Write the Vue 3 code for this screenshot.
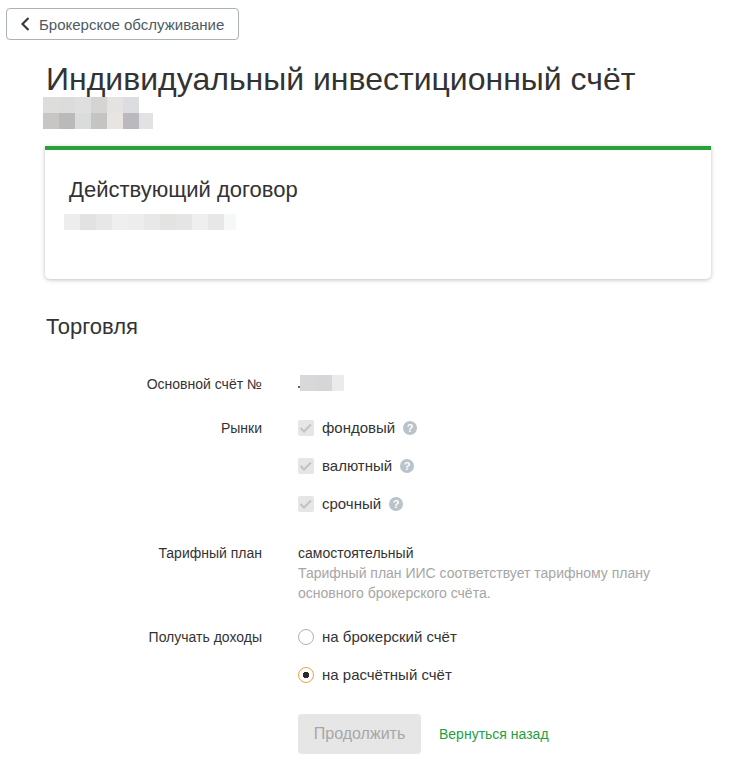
<template>
  <div class="page">
    <a class="back-btn">
      <svg class="back-icon" width="10" height="14" viewBox="0 0 10 14">
        <path d="M8.500 1 2.500 7 8.500 13" fill="none" stroke="#3c3c3c" stroke-width="2.200" />
      </svg>
      Брокерское обслуживание
    </a>

    <div class="content">
      <h1>Индивидуальный инвестиционный счёт</h1>
      <div class="blur-title">
        <div v-for="(row, i) in titleBlur" :key="i" class="blur-row">
          <span v-for="(c, j) in row" :key="j" class="cell" :style="{ background: c }"></span>
        </div>
      </div>

      <div class="card">
        <h3>Действующий договор</h3>
        <div class="blur-row contract-blur">
          <span v-for="(c, j) in contractBlur" :key="j" class="cell" :style="{ background: c }"></span>
        </div>
      </div>

      <h2>Торговля</h2>

      <div class="form">
        <div class="row account-row">
          <div class="label">Основной счёт №</div>
          <div class="value">
            <div class="blur-row account-blur">
              <span class="speck"></span>
              <span v-for="(c, j) in accountBlur" :key="j" class="cell" :style="{ background: c }"></span>
            </div>
          </div>
        </div>

        <div class="row markets-row">
          <div class="label">Рынки</div>
          <div class="value options">
            <label v-for="m in markets" :key="m" class="option">
              <span class="checkbox">
                <svg width="16" height="16" viewBox="0 0 16 16">
                  <path d="M2.500 8 6 11.500 13 4.500" fill="none" stroke="#c2c2c2" stroke-width="2" />
                </svg>
              </span>
              {{ m }}
              <span class="hint">?</span>
            </label>
          </div>
        </div>

        <div class="row plan-row">
          <div class="label">Тарифный план</div>
          <div class="value">
            <div>самостоятельный</div>
            <div class="note">Тарифный план ИИС соответствует тарифному плану<br>основного брокерского счёта.</div>
          </div>
        </div>

        <div class="row income-row">
          <div class="label">Получать доходы</div>
          <div class="value options income">
            <label class="option">
              <span class="radio"></span>
              на брокерский счёт
            </label>
            <label class="option">
              <span class="radio checked"></span>
              на расчётный счёт
            </label>
          </div>
        </div>

        <div class="row actions">
          <div class="label"></div>
          <div class="value action-line">
            <button class="submit" disabled>Продолжить</button>
            <a class="link">Вернуться назад</a>
          </div>
        </div>
      </div>
    </div>
  </div>
</template>

<script setup>
const titleBlur = [
  ['#dddddc', '#dcdcdc', '#dedfdf', '#d5d4d3', '#e5e3e2', '#dcdde1'],
  ['#c7c6c5', '#b9bab9', '#dadbdb', '#c5c4c2', '#e7e4e1', '#b9b9be', '#e2e2e5']
]
const contractBlur = ['#ededed', '#e2e2e2', '#e7e7e7', '#efefef', '#ededed', '#e8e8e8', '#e3e3e2', '#e5e5e5', '#efefef', '#e7e7e7', '#f6f7f7']
const accountBlur = ['#d8d8da', '#d6d6d8', '#ebebed']
const markets = ['фондовый', 'валютный', 'срочный']
</script>

<style>
body {
  background: #fff;
}
</style>

<style scoped>
.page {
  height: 770px;
  overflow: hidden;
  padding: 8px 0 0 6px;
  box-sizing: border-box;
  font-family: "Liberation Sans", Arial, sans-serif;
  font-size: 14px;
  color: #333;
}

.back-btn {
  display: flex;
  align-items: center;
  width: 233px;
  height: 32px;
  box-sizing: border-box;
  padding-left: 13px;
  border: 1px solid #a9b2b9;
  border-radius: 4px;
  color: #4d5a64;
  font-size: 15px;
}

.back-icon {
  margin-right: 9px;
}

.content {
  width: 666px;
  margin-left: 39px;
}

h1 {
  margin: 19px 0 0 1px;
  font-size: 32px;
  line-height: 40px;
  font-weight: 400;
  color: #333;
}

.blur-title {
  margin: -2px 0 0 -2px;
}

.blur-row {
  display: flex;
  height: 16px;
}

.cell {
  display: block;
  width: 16px;
  height: 16px;
  flex: none;
}

.blur-title .blur-row:last-child .cell:last-child {
  width: 14px;
}

.card {
  height: 133px;
  box-sizing: border-box;
  margin-top: 17px;
  padding: 28px 24px 0;
  background: #fff;
  border-top: 4px solid #28a03c;
  border-radius: 0 0 5px 5px;
  box-shadow: 0 1px 4px rgba(0, 0, 0, 0.25);
}

h3 {
  margin: 0;
  font-size: 22px;
  line-height: 24px;
  font-weight: 400;
}

.contract-blur {
  margin: 12px 0 0 -5px;
}

.contract-blur .cell:last-child {
  width: 12px;
}

h2 {
  margin: 36px 0 0 1px;
  font-size: 22px;
  line-height: 24px;
  font-weight: 400;
}

.form {
  margin-top: 35px;
}

.row {
  display: flex;
}

.label {
  width: 217px;
  flex: none;
  text-align: right;
  line-height: 20px;
}

.value {
  margin-left: 36px;
  line-height: 20px;
}

.account-blur {
  margin-top: 1px;
  align-items: flex-start;
}

.account-blur .cell:last-child {
  width: 12px;
}

.speck {
  width: 2px;
  height: 2px;
  margin-top: 11px;
  background: #666;
}

.markets-row {
  margin-top: 24px;
}

.options {
  display: flex;
  flex-direction: column;
  gap: 18px;
}

.option {
  display: flex;
  align-items: center;
  height: 20px;
  font-size: 15px;
}

.checkbox {
  display: flex;
  width: 16px;
  height: 16px;
  margin-right: 8px;
  background: #e6e6e6;
  border-radius: 2px;
}

.hint {
  width: 14px;
  height: 14px;
  margin-left: 8px;
  border-radius: 50%;
  background: #b9c3c9;
  color: #fff;
  font-size: 11px;
  font-weight: 700;
  line-height: 14px;
  text-align: center;
}

.plan-row {
  margin-top: 29px;
}

.note {
  color: #a6a6a6;
}

.income-row {
  margin-top: 24px;
}

.radio {
  width: 16px;
  height: 16px;
  margin-right: 8px;
  box-sizing: border-box;
  border: 1.500px solid #a9b2b9;
  border-radius: 50%;
}

.radio.checked {
  border-color: #f5a03c;
  background: radial-gradient(circle, #2b2b2b 3px, #fff 3.500px);
}

.actions {
  margin-top: 29px;
}

.action-line {
  display: flex;
  align-items: center;
}

.submit {
  width: 123px;
  height: 40px;
  padding: 0;
  border: 0;
  border-radius: 4px;
  background: #e6e6e6;
  color: #a6a6a6;
  font-family: inherit;
  font-size: 16px;
}

.link {
  margin-left: 18px;
  color: #1f9e46;
}
</style>
